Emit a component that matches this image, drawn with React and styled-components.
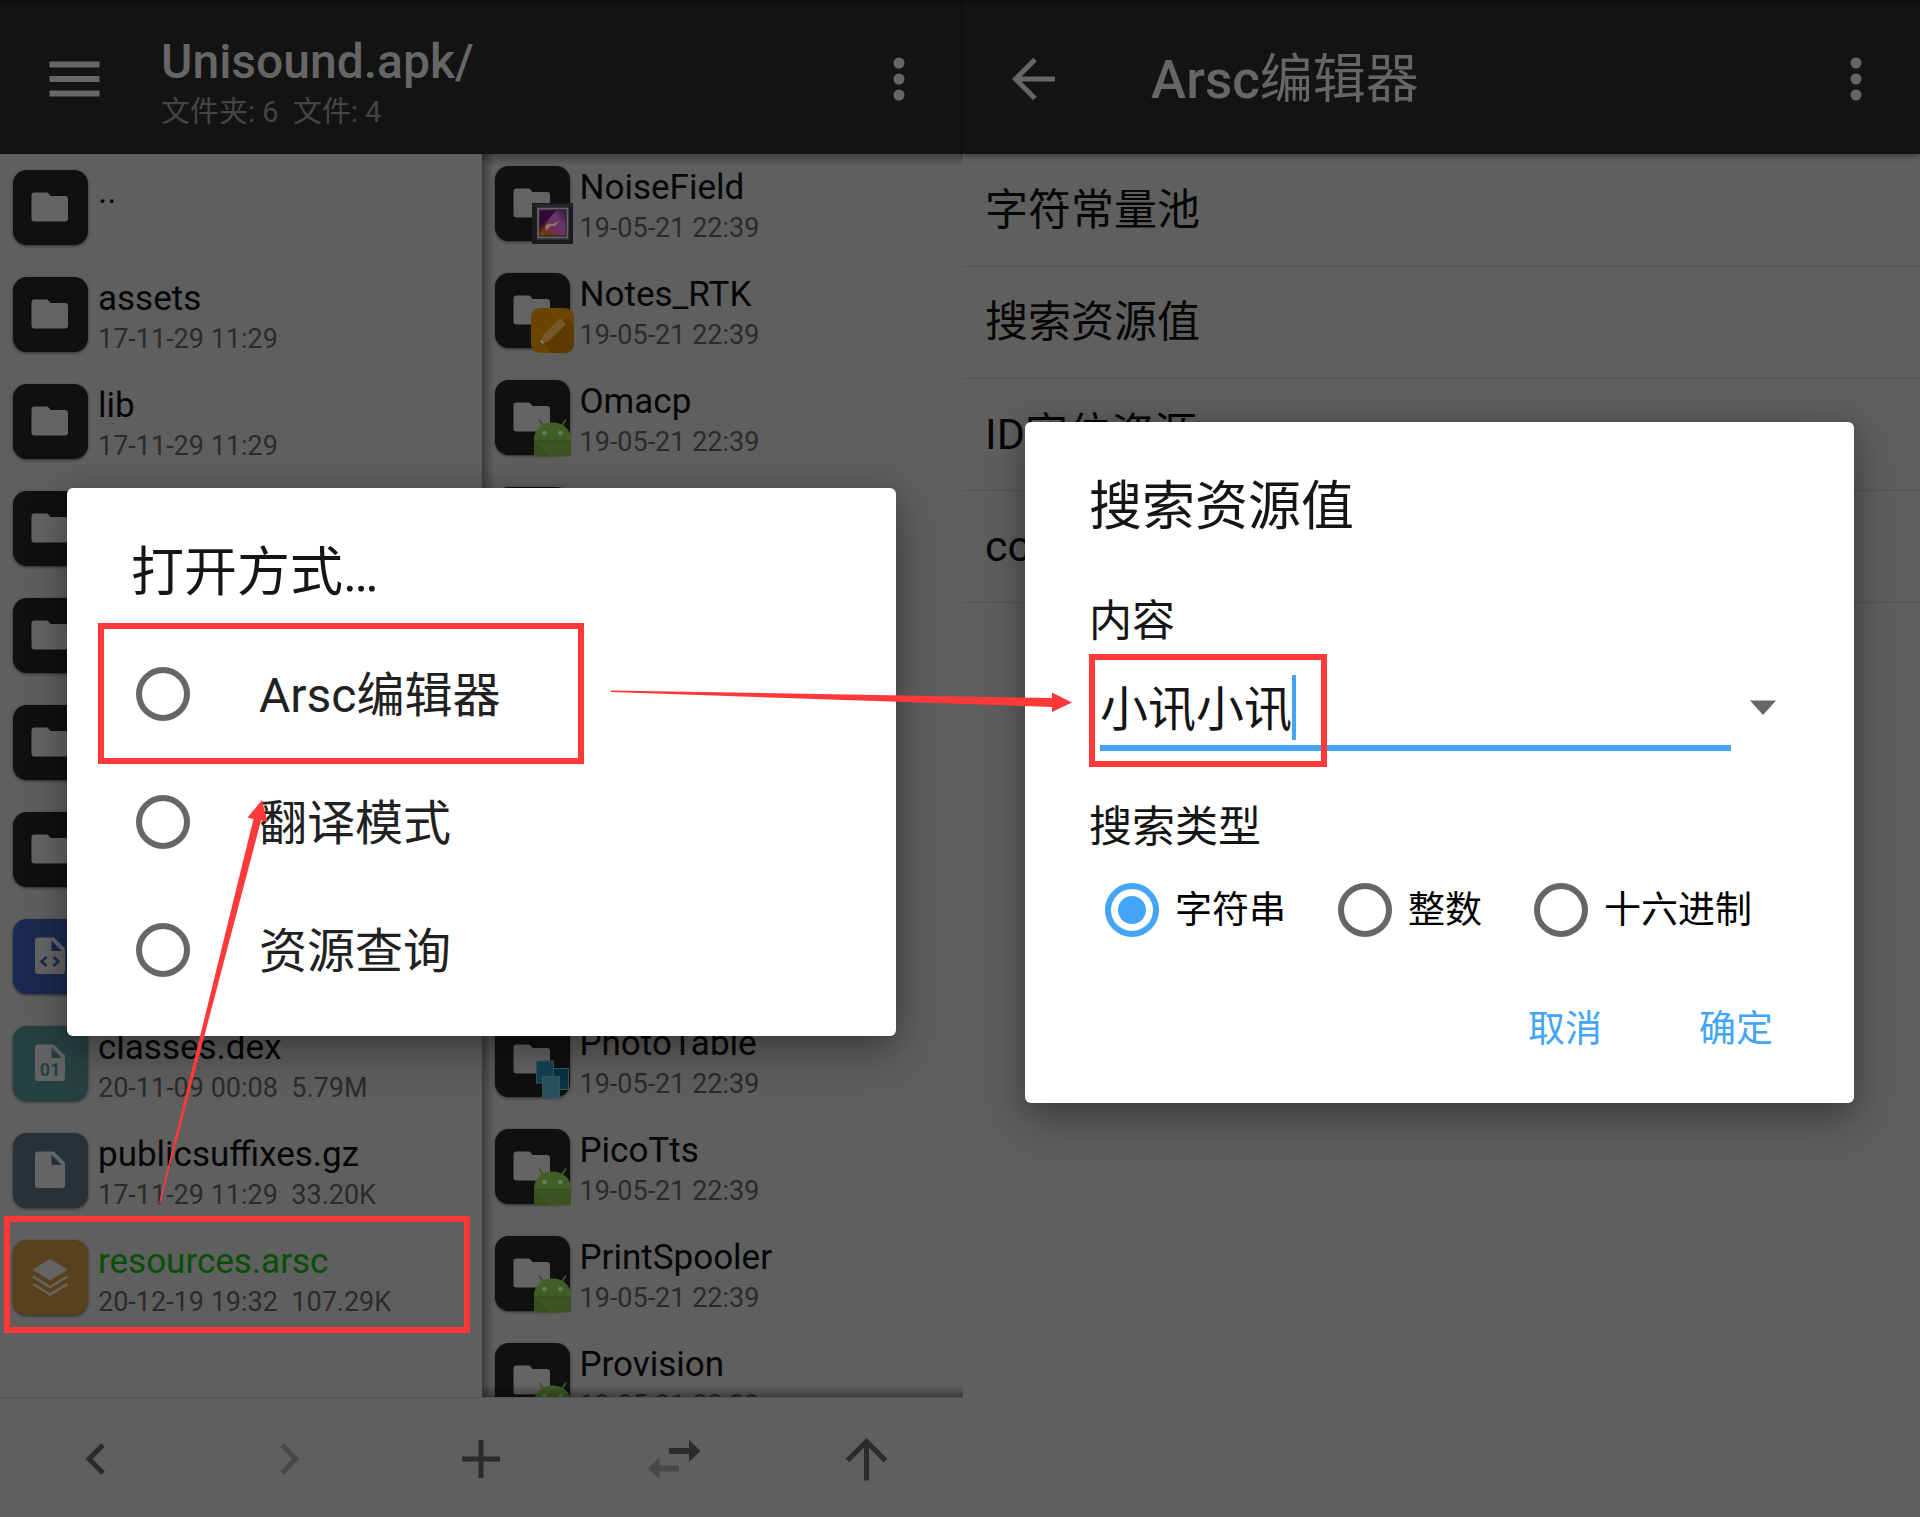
import React, { useState } from "react";
import styled, { createGlobalStyle, css } from "styled-components";

const c = {
  page: "#5f5f5f",
  bar: "#131313",
  tile: "#101010",
  glyph: "#646464",
  barText: "#666666",
  barSub: "#454545",
  name: "#060606",
  meta: "#2b2b2b",
  line: "#545454",
  red: "#ff3939",
  blue: "#42a5f5",
  ring: "#666666",
};

const GlobalStyle = createGlobalStyle`
  *, *::before, *::after { box-sizing: border-box; }
  body {
    margin: 0;
    background: ${c.page};
    font-family: Roboto, "Noto Sans CJK SC", sans-serif;
  }
  button, input { font: inherit; color: inherit; margin: 0; }
  button { padding: 0; border: 0; background: none; }
  h1, h2, p, ul, fieldset { margin: 0; padding: 0; border: 0; font-weight: 400; }
  ul { list-style: none; }
`;

/* ---------- shell ---------- */

const Page = styled.main`
  position: relative;
  display: grid;
  grid-template-columns: 963fr 957fr;
  height: 100vh;
  overflow: hidden;
`;

const Screen = styled.section`
  position: relative;
  display: flex;
  flex-direction: column;
  min-width: 0;
  min-height: 0;
`;

const AppBar = styled.header`
  flex: none;
  display: flex;
  align-items: center;
  height: 154px;
  padding: 0 34px 0 49px;
  border-top: 4px solid #0e0e0e;
  background: ${c.bar};
  color: ${c.barText};
  ${(p) => p.$raised && css`box-shadow: 0 2px 6px rgba(0, 0, 0, 0.4);`}
`;

const IconButton = styled.button`
  display: flex;
  align-items: center;
  justify-content: center;
  width: ${(p) => p.$width}px;
  height: 60px;
`;

const Heading = styled.div`
  flex: 1;
  padding-left: ${(p) => p.$indent}px;
`;

const FolderTitle = styled.h1`
  padding-top: 6px;
  font-size: 48px;
  line-height: 56px;
  font-weight: 500;
`;

const ScreenTitle = styled.h1`
  padding-top: 2px;
  font-size: 53px;
  line-height: 62px;
  font-weight: 500;
  span { font-weight: 400; }
`;

const FolderSummary = styled.p`
  margin-top: 4px;
  font-size: 29px;
  line-height: 36px;
  color: ${c.barSub};
  white-space: pre;
`;

/* ---------- file panes ---------- */

const Panes = styled.div`
  flex: 1;
  display: grid;
  grid-template-columns: 1fr 1fr;
  min-height: 0;
`;

const Pane = styled.div`
  position: relative;
  overflow: hidden;
  ${(p) => p.$inset && css`
    &::after {
      content: "";
      position: absolute;
      inset: 0;
      pointer-events: none;
      background:
        linear-gradient(to right, rgba(0, 0, 0, 0.35), transparent 12px),
        linear-gradient(to bottom, rgba(0, 0, 0, 0.3), transparent 12px),
        linear-gradient(to top, rgba(0, 0, 0, 0.35), transparent 12px);
    }
  `}
`;

const FileList = styled.ul`
  ${(p) => p.$scrolled && css`margin-top: -4px;`}
`;

const FileRow = styled.li`
  position: relative;
  display: flex;
  gap: 10px;
  height: 107px;
  padding: 16px 13px;
  ${(p) => p.$marked && css`
    &::after {
      content: "";
      position: absolute;
      inset: -8px 12px -2px 4px;
      border: 6px solid ${c.red};
    }
  `}
`;

const Tile = styled.span`
  position: relative;
  flex: none;
  width: 75px;
  height: 75px;
  border-radius: 14px;
  background: ${(p) => p.$color};
  box-shadow: 0 1px 3px rgba(0, 0, 0, 0.55);
  svg { position: absolute; top: 0; left: 0; overflow: visible; }
`;

const FileText = styled.div`
  display: flex;
  flex-direction: column;
  gap: 2px;
  white-space: pre;
`;

const FileName = styled.span`
  font-size: 35px;
  line-height: 44px;
  color: ${(p) => (p.$active ? "#074f07" : c.name)};
`;

const FileMeta = styled.span`
  font-size: 27px;
  line-height: 32px;
  color: ${c.meta};
`;

const Toolbar = styled.nav`
  flex: none;
  display: grid;
  grid-template-columns: repeat(5, 1fr);
  height: 120px;
  padding-top: 2px;
  border-top: 1px solid ${c.line};
  color: #2b2b2b;
`;

const ToolButton = styled.button`
  display: flex;
  align-items: center;
  justify-content: center;
`;

/* ---------- menu on the right screen ---------- */

const MenuList = styled.ul`
  padding-top: 1px;
`;

const MenuItem = styled.li`
  display: flex;
  align-items: center;
  height: 112px;
  padding: 0 22px 2px;
  border-bottom: 1px solid ${c.line};
  font-size: 43px;
  line-height: 50px;
  color: ${c.name};
`;

/* ---------- dialogs ---------- */

const DialogLayer = styled.div`
  position: absolute;
  inset: 0;
  display: flex;
  align-items: center;
  justify-content: center;
  padding-top: 7px;
  ${(p) => p.$inset && css`padding-right: 4px;`}
`;

const Dialog = styled.div`
  width: min(829px, 88%);
  padding: 54px 0 ${(p) => p.$bottom}px;
  border-radius: 6px;
  background: #fff;
  color: #151515;
  box-shadow: 0 18px 44px rgba(0, 0, 0, 0.32), 0 0 24px rgba(0, 0, 0, 0.14);
`;

const DialogTitle = styled.h2`
  padding: 0 64px;
  font-size: 53px;
  line-height: 62px;
`;

const Options = styled.fieldset`
  margin-top: 26px;
`;

const Option = styled.label`
  position: relative;
  display: flex;
  align-items: center;
  gap: 69px;
  height: 128px;
  padding-left: 69px;
  font-size: 48px;
  line-height: 56px;
  color: #212121;
  ${(p) => p.$marked && css`
    &::after {
      content: "";
      position: absolute;
      inset: -7px auto -6px 31px;
      width: 486px;
      border: 6px solid ${c.red};
    }
  `}
`;

const LabelText = styled.span`
  padding-top: 3px;
`;

const Radio = styled.input`
  appearance: none;
  flex: none;
  display: grid;
  place-items: center;
  width: 54px;
  height: 54px;
  border: 6px solid ${c.ring};
  border-radius: 50%;
  &:checked { border-color: ${c.blue}; }
  &:checked::before {
    content: "";
    width: 28px;
    height: 28px;
    border-radius: 50%;
    background: ${c.blue};
  }
`;

const FieldLabel = styled.label`
  display: block;
  margin-top: ${(p) => p.$gap}px;
  padding-left: 64px;
  font-size: 43px;
  line-height: 50px;
`;

const FieldRow = styled.div`
  position: relative;
  display: flex;
  margin-top: 29px;
  padding: 0 59px 0 75px;
  &::after {
    content: "";
    position: absolute;
    inset: -21px auto -16px 64px;
    width: 238px;
    border: 6px solid ${c.red};
    pointer-events: none;
  }
`;

const Field = styled.div`
  flex: 1;
  display: flex;
  height: 76px;
  border-bottom: 6px solid ${c.blue};
`;

const TextInput = styled.input`
  field-sizing: content;
  height: 70px;
  padding: 0;
  border: 0;
  outline: 0;
  background: none;
  font-size: 48px;
  line-height: 70px;
`;

const Caret = styled.span`
  width: 4px;
  height: 65px;
  background: ${c.blue};
`;

const DropButton = styled.button`
  display: flex;
  align-items: center;
  justify-content: center;
  width: 64px;
  height: 66px;
`;

const TypeRow = styled.div`
  display: flex;
  gap: 52px;
  margin-top: 31px;
  padding-left: 80px;
`;

const TypeOption = styled.label`
  display: flex;
  align-items: center;
  gap: 16px;
  font-size: 37px;
  line-height: 44px;
  color: #000;
`;

const Actions = styled.div`
  display: flex;
  justify-content: flex-end;
  gap: 97px;
  margin-top: 71px;
  padding-right: 81px;
`;

const Action = styled.button`
  font-size: 37px;
  line-height: 44px;
  color: ${c.blue};
`;

const ArrowLayer = styled.svg`
  position: absolute;
  top: 0;
  left: 0;
  pointer-events: none;
`;

/* ---------- drawings ---------- */

const FilePage = () => (
  <path
    fill={c.glyph}
    fillRule="evenodd"
    d="M25 18.500H41L52 29.500V52a3 3 0 0 1-3 3H25a3 3 0 0 1-3-3V21.500a3 3 0 0 1 3-3zM38.500 21.500V32H49z"
  />
);

const glyphs = {
  folder: (
    <path
      fill={c.glyph}
      d="M21.500 22.500H33.500a3 3 0 0 1 2 1L37.500 26H52a3 3 0 0 1 3 3V48.500a3 3 0 0 1-3 3H21.500a3 3 0 0 1-3-3V25.500a3 3 0 0 1 3-3z"
    />
  ),
  code: (
    <g>
      <FilePage />
      <path d="M33.500 38L28.500 42.500L33.500 47M40.500 38L45.500 42.500L40.500 47" fill="none" stroke="#1a2a50" strokeWidth="2.500" />
    </g>
  ),
  dex: (
    <g>
      <FilePage />
      <text x="37" y="50" textAnchor="middle" fontSize="18" fontWeight="700" fill="#264141">01</text>
    </g>
  ),
  file: <FilePage />,
  layers: (
    <g>
      <path fill={c.glyph} stroke={c.glyph} strokeLinejoin="round" d="M37 19.500L54 29.500L37 40L20 29.500z" />
      <path fill="none" stroke={c.glyph} strokeWidth="2.500" d="M20 36.500L37 47L54.500 36.500M20 44L37 54.500L54.500 44" />
    </g>
  ),
};

const tileColors = {
  folder: c.tile,
  code: "#1a2a50",
  dex: "#264141",
  file: "#273138",
  layers: "#58411b",
};

const badges = {
  android: (
    <g>
      <path d="M44 39.500L48 45.500M71 39.500L67 45.500" stroke="#3c5822" strokeWidth="1.800" />
      <path fill="#415f25" d="M39 60C39 49 47 42.500 57.500 42.500S76 49 76 60z" />
      <path fill="#3c5522" d="M39 60H76V75a1.500 1.500 0 0 1-1.500 1.500H40.500A1.500 1.500 0 0 1 39 75z" />
      <path fill="#34491e" d="M39 60H76V61H39zM39 61L55 76H39z" opacity="0.6" />
      <circle cx="49.500" cy="53" r="2.300" fill="#6a7a60" />
      <circle cx="65.500" cy="53" r="2.300" fill="#6a7a60" />
    </g>
  ),
  notes: (
    <g>
      <rect x="36" y="35" width="43" height="45" rx="9" fill="#6b4400" />
      <path d="M71 46L79 52V71a9 9 0 0 1-9 9H56L48 70z" fill="#5c3a00" />
      <path d="M65 45L71 51.500L52.500 69L47 63z" fill="#75592b" />
      <path d="M47 63L52.500 69L45 71.500z" fill="#75592b" />
      <path d="M46 66.500L49 70L45 71.500z" fill="#8a8070" />
      <path d="M45.500 69L47.500 71L44.500 72z" fill="#4a2e00" />
    </g>
  ),
  gallery: (
    <g>
      <defs>
        <linearGradient id="photo" x1="0" y1="1" x2="1" y2="0.200">
          <stop offset="0" stopColor="#6e5010" />
          <stop offset="0.250" stopColor="#6a3414" />
          <stop offset="0.450" stopColor="#6a3058" />
          <stop offset="0.750" stopColor="#66386a" />
          <stop offset="1" stopColor="#43204c" />
        </linearGradient>
      </defs>
      <rect x="37" y="37" width="41" height="41" fill="#1b1a1e" />
      <rect x="38" y="38" width="39" height="3" fill="#26252a" />
      <path d="M41 73.500H74" stroke="#303034" strokeWidth="1" />
      <rect x="43" y="42.500" width="29.500" height="29" fill="#242226" stroke="#66646a" strokeWidth="1.800" />
      <rect x="44.500" y="44.500" width="26" height="25" fill="url(#photo)" />
      <path d="M44.500 44.500H61L51 56L44.500 63z" fill="#300a36" />
      <path d="M44.500 64L51 56L54 54L49 62L44.500 69z" fill="#5e1c18" />
      <path d="M50 60C53 57 56 58 58 58L64 55L60 60L56 60L51 65z" fill="#a8848a" opacity="0.700" />
    </g>
  ),
  photos: (
    <g stroke="#3b5560" strokeWidth="1">
      <rect x="58.500" y="46.500" width="15" height="21" fill="#0a3443" />
      <rect x="41.500" y="39" width="17" height="22" fill="#124355" />
      <rect x="47.500" y="54.500" width="17" height="21.500" fill="#2b5160" />
    </g>
  ),
};

const FileIcon = ({ kind, badge }) => (
  <Tile $color={tileColors[kind]}>
    <svg width="75" height="75" viewBox="0 0 75 75" aria-hidden="true">
      {glyphs[kind]}
      {badge && badges[badge]}
    </svg>
  </Tile>
);

const MoreIcon = () => (
  <svg width="12" height="44" viewBox="0 0 12 44" fill="currentColor" aria-hidden="true">
    <circle cx="6" cy="6" r="5.500" />
    <circle cx="6" cy="22" r="5.500" />
    <circle cx="6" cy="38" r="5.500" />
  </svg>
);

const toolIcons = {
  back: <path d="M29 8L15 22L29 36" stroke="currentColor" strokeWidth="5" fill="none" />,
  forward: <path d="M15 8L29 22L15 36" stroke="#484848" strokeWidth="5" fill="none" />,
  add: <path d="M3 22H41M22 3V41" stroke="currentColor" strokeWidth="5" fill="none" />,
};

/* ---------- data ---------- */

const leftFiles = [
  { name: "..", meta: "", kind: "folder" },
  { name: "assets", meta: "17-11-29 11:29", kind: "folder" },
  { name: "lib", meta: "17-11-29 11:29", kind: "folder" },
  { name: "META-INF", meta: "17-11-29 11:29", kind: "folder" },
  { name: "okhttp3", meta: "17-11-29 11:29", kind: "folder" },
  { name: "org", meta: "17-11-29 11:29", kind: "folder" },
  { name: "res", meta: "17-11-29 11:29", kind: "folder" },
  { name: "AndroidManifest.xml", meta: "17-11-29 11:29", kind: "code" },
  { name: "classes.dex", meta: "20-11-09 00:08  5.79M", kind: "dex" },
  { name: "publicsuffixes.gz", meta: "17-11-29 11:29  33.20K", kind: "file" },
  { name: "resources.arsc", meta: "20-12-19 19:32  107.29K", kind: "layers", marked: true },
];

const rightFiles = [
  ["NoiseField", "gallery"],
  ["Notes_RTK", "notes"],
  ["Omacp", "android"],
  ["OneTimeInit", "android"],
  ["OpenWnn", "android"],
  ["PacProcessor", "android"],
  ["Phasebeam", "android"],
  ["Phone", "android"],
  ["PhotoTable", "photos"],
  ["PicoTts", "android"],
  ["PrintSpooler", "android"],
  ["Provision", "android"],
].map(([name, badge]) => ({ name, badge, meta: "19-05-21 22:39", kind: "folder" }));

const Files = ({ items, scrolled }) => (
  <FileList $scrolled={scrolled}>
    {items.map((f) => (
      <FileRow key={f.name} $marked={f.marked}>
        <FileIcon kind={f.kind} badge={f.badge} />
        <FileText>
          <FileName $active={f.marked}>{f.name}</FileName>
          <FileMeta>{f.meta}</FileMeta>
        </FileText>
      </FileRow>
    ))}
  </FileList>
);

/* ---------- screens ---------- */

const ArchiveScreen = () => (
  <Screen>
    <AppBar>
      <IconButton $width={51} aria-label="菜单">
        <svg width="51" height="36" viewBox="0 0 51 36" aria-hidden="true">
          <path d="M0.500 3.500H50.500M0.500 18H50.500M0.500 32.500H50.500" stroke="currentColor" strokeWidth="6" />
        </svg>
      </IconButton>
      <Heading $indent={61}>
        <FolderTitle>Unisound.apk/</FolderTitle>
        <FolderSummary>{"文件夹: 6  文件: 4"}</FolderSummary>
      </Heading>
      <IconButton $width={60} aria-label="更多"><MoreIcon /></IconButton>
    </AppBar>
    <Panes>
      <Pane><Files items={leftFiles} /></Pane>
      <Pane $inset><Files items={rightFiles} scrolled /></Pane>
    </Panes>
    <Toolbar>
      {[["后退", "back"], ["前进", "forward"], ["新建", "add"]].map(([label, id]) => (
        <ToolButton key={id} aria-label={label}>
          <svg width="44" height="44" viewBox="0 0 44 44" aria-hidden="true">{toolIcons[id]}</svg>
        </ToolButton>
      ))}
      <ToolButton aria-label="交换">
        <svg width="54" height="44" viewBox="0 0 54 44" aria-hidden="true">
          <path fill="currentColor" d="M22 11H42V3L53.500 14L42 25V17H22z" />
          <path fill="#484848" d="M32 34.500H12.500V42.500L1 31.500L12.500 20.500V28.500H32z" />
        </svg>
      </ToolButton>
      <ToolButton aria-label="上级">
        <svg width="44" height="46" viewBox="0 0 44 46" aria-hidden="true">
          <path fill="none" stroke="currentColor" strokeWidth="5" d="M21.500 44.500V5M2.500 24.500L21.500 5.500L40.500 24.500" />
        </svg>
      </ToolButton>
    </Toolbar>
    <DialogLayer>
      <Dialog role="dialog" aria-labelledby="open-title" $bottom={22}>
        <DialogTitle id="open-title">打开方式…</DialogTitle>
        <Options>
          {["Arsc编辑器", "翻译模式", "资源查询"].map((text, i) => (
            <Option key={text} $marked={i === 0}>
              <Radio type="radio" name="open-with" />
              <LabelText>{text}</LabelText>
            </Option>
          ))}
        </Options>
      </Dialog>
    </DialogLayer>
  </Screen>
);

const EditorScreen = () => {
  const [query, setQuery] = useState("小讯小讯");
  return (
    <Screen>
      <AppBar $raised>
        <IconButton $width={43} aria-label="返回">
          <svg width="43" height="44" viewBox="0 0 43 44" aria-hidden="true">
            <path fill="none" stroke="currentColor" strokeWidth="5" d="M43 22H5M23 2.500L3.500 22L23 41.500" />
          </svg>
        </IconButton>
        <Heading $indent={96}>
          <ScreenTitle>Arsc<span>编辑器</span></ScreenTitle>
        </Heading>
        <IconButton $width={60} aria-label="更多"><MoreIcon /></IconButton>
      </AppBar>
      <MenuList>
        {["字符常量池", "搜索资源值", "ID定位资源", "config"].map((t) => (
          <MenuItem key={t}>{t}</MenuItem>
        ))}
      </MenuList>
      <DialogLayer $inset>
        <Dialog role="dialog" aria-labelledby="search-title" $bottom={51}>
          <DialogTitle id="search-title">搜索资源值</DialogTitle>
          <FieldLabel htmlFor="query" $gap={58}>内容</FieldLabel>
          <FieldRow>
            <Field>
              <TextInput id="query" type="text" value={query} onChange={(e) => setQuery(e.target.value)} />
              <Caret />
            </Field>
            <DropButton aria-label="历史记录">
              <svg width="26" height="15" viewBox="0 0 26 15" aria-hidden="true">
                <path fill={c.ring} d="M0 0.500H26L13 15z" />
              </svg>
            </DropButton>
          </FieldRow>
          <FieldLabel as="p" id="type-label" $gap={51}>搜索类型</FieldLabel>
          <TypeRow role="radiogroup" aria-labelledby="type-label">
            {["字符串", "整数", "十六进制"].map((t, i) => (
              <TypeOption key={t}>
                <Radio type="radio" name="type" defaultChecked={i === 0} />
                <LabelText>{t}</LabelText>
              </TypeOption>
            ))}
          </TypeRow>
          <Actions>
            <Action>取消</Action>
            <Action>确定</Action>
          </Actions>
        </Dialog>
      </DialogLayer>
    </Screen>
  );
};

export default function App() {
  return (
    <>
      <GlobalStyle />
      <Page>
        <ArchiveScreen />
        <EditorScreen />
        <ArrowLayer width="1100" height="1220" viewBox="0 0 1100 1220" aria-hidden="true">
          <path fill={c.red} d="M159 1203L253.500 819L247.500 817.500L262 800L267.500 822L261 820.500L160.500 1203z" />
          <path fill={c.red} d="M611 690.500L1052 698V692.500L1072 702.500L1052 712V707L611 692z" />
        </ArrowLayer>
      </Page>
    </>
  );
}
